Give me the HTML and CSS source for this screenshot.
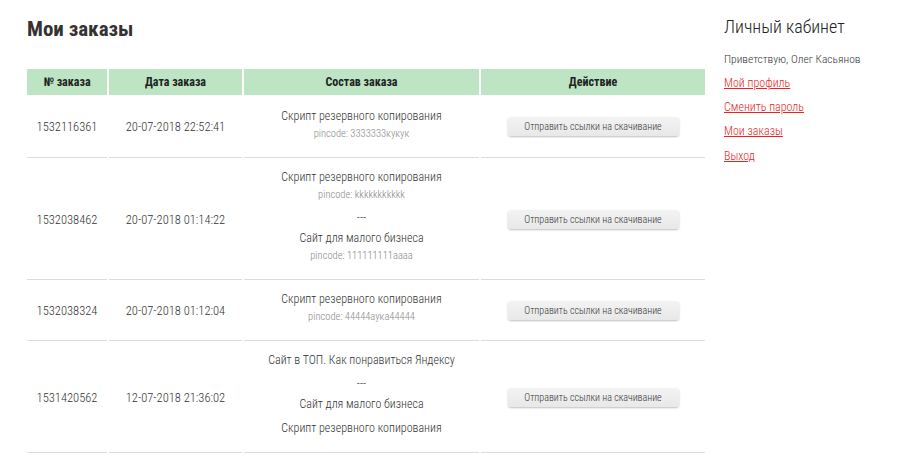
FILE: index.html
```html
<!DOCTYPE html>
<html lang="ru">
<head>
<meta charset="utf-8">
<title>Мои заказы</title>
<link rel="stylesheet" href="styles.css">
</head>
<body>
<div class="page">
  <main class="main">
    <h1 class="title">Мои заказы</h1>
    <table class="orders">
      <colgroup>
        <col class="c-num"><col class="c-date"><col class="c-items"><col class="c-act">
      </colgroup>
      <thead>
        <tr><th>№ заказа</th><th>Дата заказа</th><th>Состав заказа</th><th>Действие</th></tr>
      </thead>
      <tbody>
        <tr class="first">
          <td class="mid">1532116361</td>
          <td class="mid">20-07-2018 22:52:41</td>
          <td class="items">
            <div class="name">Скрипт резервного копирования</div>
            <div class="pin">pincode: 3333333кукук</div>
          </td>
          <td class="mid"><button class="btn">Отправить ссылки на скачивание</button></td>
        </tr>
        <tr>
          <td class="mid">1532038462</td>
          <td class="mid">20-07-2018 01:14:22</td>
          <td class="items">
            <div class="name">Скрипт резервного копирования</div>
            <div class="pin">pincode: kkkkkkkkkkk</div>
            <div class="sep">---</div>
            <div class="name">Сайт для малого бизнеса</div>
            <div class="pin">pincode: 111111111aaaa</div>
          </td>
          <td class="mid"><button class="btn">Отправить ссылки на скачивание</button></td>
        </tr>
        <tr>
          <td class="mid">1532038324</td>
          <td class="mid">20-07-2018 01:12:04</td>
          <td class="items">
            <div class="name">Скрипт резервного копирования</div>
            <div class="pin">pincode: 44444аука44444</div>
          </td>
          <td class="mid"><button class="btn">Отправить ссылки на скачивание</button></td>
        </tr>
        <tr>
          <td class="mid">1531420562</td>
          <td class="mid">12-07-2018 21:36:02</td>
          <td class="items">
            <div class="name">Сайт в ТОП. Как понравиться Яндексу</div>
            <div class="sep">---</div>
            <div class="name">Сайт для малого бизнеса</div>
            <div class="gap"></div>
            <div class="name">Скрипт резервного копирования</div>
          </td>
          <td class="mid"><button class="btn">Отправить ссылки на скачивание</button></td>
        </tr>
      </tbody>
    </table>
  </main>
  <aside class="side">
    <h2 class="side-title">Личный кабинет</h2>
    <p class="hello">Приветствую, Олег Касьянов</p>
    <ul class="menu">
      <li><a href="#">Мой профиль</a></li>
      <li><a href="#">Сменить пароль</a></li>
      <li><a href="#">Мои заказы</a></li>
      <li><a href="#">Выход</a></li>
    </ul>
  </aside>
</div>
</body>
</html>
```

FILE: styles.css
```css
html, body {
  margin: 0;
  padding: 0;
  background: #fff;
}
body {
  font-family: "Roboto Condensed", "DejaVu Sans Condensed", sans-serif;
  font-weight: 300;
  color: #333;
}
.page {
  display: flex;
  align-items: flex-start;
  padding-left: 25px;
}
.main {
  width: 682px;
}
.title {
  margin: 14px 0 0 2px;
  font-size: 21px;
  line-height: 30px;
  font-weight: 700;
  color: #333;
}
.orders {
  margin-top: 24px;
  border-collapse: separate;
  border-spacing: 2px 1px;
  table-layout: fixed;
  width: 682px;
  font-size: 12.5px;
}
.c-num { width: 80px; }
.c-date { width: 133px; }
.c-items { width: 235px; }
.c-act { width: 224px; }
.orders th {
  background: #bde5c3;
  height: 26px;
  padding: 0;
  font-size: 12px;
  font-weight: 700;
  color: #222;
  text-align: center;
  vertical-align: middle;
}
.orders td {
  border-bottom: 1px solid #dcdcdc;
  text-align: center;
  padding: 0 4px;
  color: #333;
}
.orders td.mid {
  vertical-align: middle;
}
.orders td.items {
  vertical-align: top;
  padding: 9px 4px 15px;
}
.orders tr.first td.items {
  padding-top: 11px;
}
.name {
  line-height: 18px;
  font-size: 12px;
  color: #333;
}
.pin {
  line-height: 17px;
  font-size: 10.5px;
  color: #888;
}
.sep {
  padding-top: 6px;
  padding-bottom: 2px;
  line-height: 18px;
  font-size: 12px;
  color: #333;
}
.gap {
  height: 6px;
}
.btn {
  width: 171px;
  height: 19px;
  padding: 0;
  border: 0;
  border-radius: 3px;
  background: linear-gradient(#f3f3f3, #e8e8e8);
  box-shadow: 0 1px 2px rgba(0,0,0,0.25);
  font-family: inherit;
  font-weight: 300;
  font-size: 10px;
  color: #333;
}
.side {
  margin-left: 17px;
  width: 170px;
}
.side-title {
  margin: 16px 0 0;
  font-size: 18px;
  line-height: 22px;
  font-weight: 300;
  color: #222;
}
.hello {
  margin: 12px 0 0;
  font-size: 11.5px;
  line-height: 18px;
  color: #333;
}
.menu {
  list-style: none;
  margin: 6px 0 0;
  padding: 0;
}
.menu li {
  line-height: 18px;
  margin-bottom: 6px;
  font-size: 12px;
}
.menu li:nth-child(3) {
  margin-bottom: 7px;
}
.menu a {
  color: #e8241c;
  text-decoration: underline;
}
```
